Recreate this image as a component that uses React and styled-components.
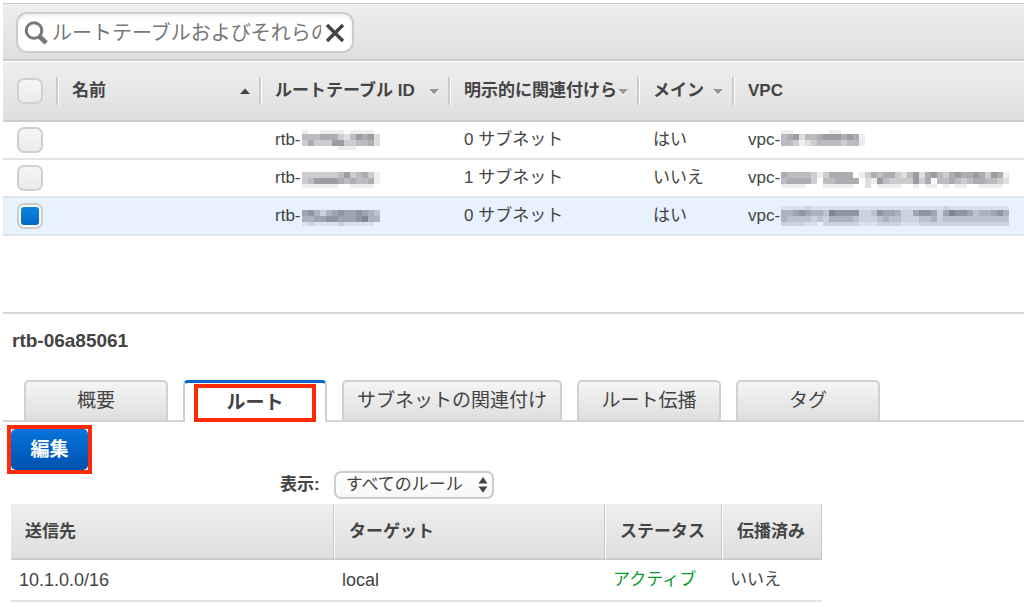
import { useState } from 'react';
import styled, { createGlobalStyle } from 'styled-components';

const GlobalStyle = createGlobalStyle`
  * {
    box-sizing: border-box;
  }

  body {
    margin: 0;
    background: #fff;
    color: #444;
    font-family: 'Liberation Sans', 'Noto Sans CJK JP', sans-serif;
    font-size: 17px;
    line-height: 24px;
  }

  button,
  input,
  select {
    font-family: inherit;
    line-height: inherit;
    color: inherit;
  }
`;

// each digit is how dark one mosaic block is
const MASKS = {
  rtbA: ['1001111011110', '4445553246562', '3533366334452', '0000001110000'],
  rtbB: ['0000000000000', '3333334634531', '3466665454451', '1111110011110'],
  rtbC: ['0000000000000', '5642456556543', '4455665556744', '1211112111110'],
  vpcA: ['11000000110000', '45624456665651', '44312344443441', '00000000000000'],
  vpcB: [
    '00000000000000000000000000000000000000',
    '54444313555501354553246256435655653651',
    '45555304455550216433336350445434554432',
    '11110001111100201111001011010110011110',
  ],
  vpcC: [
    '11112111111111111111111111121111111111',
    '44565443766662236554225665257665344564',
    '43333232444432223433222334233333333333',
    '22221102222221112222111222222222222222',
  ],
};

const TABLES = [
  { id: 'a', rtb: 'rtbA', subnets: '0 サブネット', main: 'はい', vpc: 'vpcA' },
  { id: 'b', rtb: 'rtbB', subnets: '1 サブネット', main: 'いいえ', vpc: 'vpcB' },
  { id: 'c', rtb: 'rtbC', subnets: '0 サブネット', main: 'はい', vpc: 'vpcC' },
];

const COLUMNS = [
  { label: '名前', width: 203, sort: 'asc' },
  { label: 'ルートテーブル ID', width: 189, sort: 'none' },
  { label: '明示的に関連付けられ', width: 189, sort: 'none' },
  { label: 'メイン', width: 95, sort: 'none' },
  { label: 'VPC' },
];

const TABS = ['概要', 'ルート', 'サブネットの関連付け', 'ルート伝播', 'タグ'];

const Mosaic = ({ rows }) => (
  <MosaicSvg width={rows[1].length * 6} height="20" aria-hidden="true">
    {rows.map((row, y) =>
      [...row].map((level, x) => (
        <rect
          key={`${x}-${y}`}
          x={x * 6}
          y={[0, 4, 10, 16][y]}
          width="6"
          height={[4, 6, 6, 4][y]}
          fill="#3c3c46"
          fillOpacity={level * 0.085}
        />
      ))
    )}
  </MosaicSvg>
);

const SortArrow = ({ dir }) => (
  <svg width="12" height="12" viewBox="0 0 12 12" aria-hidden="true">
    {dir === 'asc' ? (
      <path d="M1 9 6 3.6 11 9z" fill="#444" />
    ) : (
      <>
        <path d="M1 5h10L6 11z" fill="#fff" />
        <path d="M1 4h10L6 9.4z" fill="#999" />
      </>
    )}
  </svg>
);

const App = () => {
  const [query, setQuery] = useState('');
  const [selected, setSelected] = useState('c');
  const [tab, setTab] = useState('ルート');

  return (
    <Page>
      <GlobalStyle />
      <SearchBar>
        <SearchBox>
          <svg width="24" height="24" viewBox="0 0 24 24" aria-hidden="true">
            <circle cx="10" cy="9.5" r="7.8" fill="none" stroke="#777" strokeWidth="3" />
            <path d="m15.3 15.3 6.8 6.6" stroke="#777" strokeWidth="4.8" />
          </svg>
          <SearchInput
            aria-label="検索"
            placeholder="ルートテーブルおよびそれらの属性の検索"
            value={query}
            onChange={(e) => setQuery(e.target.value)}
          />
          <ClearButton type="button" aria-label="クリア" onClick={() => setQuery('')}>
            <svg width="20" height="20" viewBox="0 0 20 20" aria-hidden="true">
              <path d="m2 2 16 16M18 2 2 18" stroke="#444" strokeWidth="3.4" />
            </svg>
          </ClearButton>
        </SearchBox>
      </SearchBar>

      <ListTable>
        <colgroup>
          <Col $width={53} />
          {COLUMNS.map((c) => (
            <Col key={c.label} $width={c.width} />
          ))}
        </colgroup>
        <thead>
          <tr>
            <ListHead>
              <Checkbox aria-label="すべて選択" />
            </ListHead>
            {COLUMNS.map((c) => (
              <ListHead key={c.label}>
                <SortButton type="button">
                  <span>{c.label}</span>
                  {c.sort && <SortArrow dir={c.sort} />}
                </SortButton>
              </ListHead>
            ))}
          </tr>
        </thead>
        <tbody>
          {TABLES.map((t) => (
            <ListRow key={t.id} $selected={selected === t.id}>
              <CheckCell>
                <Checkbox
                  aria-label="ルートテーブルを選択"
                  checked={selected === t.id}
                  onChange={() => setSelected(t.id)}
                />
              </CheckCell>
              <td />
              <td>
                <Masked>
                  rtb-
                  <Mosaic rows={MASKS[t.rtb]} />
                </Masked>
              </td>
              <td>{t.subnets}</td>
              <td>{t.main}</td>
              <td>
                <Masked>
                  vpc-
                  <Mosaic rows={MASKS[t.vpc]} />
                </Masked>
              </td>
            </ListRow>
          ))}
        </tbody>
      </ListTable>

      <Detail>
        <DetailTitle>rtb-06a85061</DetailTitle>
        <TabList role="tablist">
          {TABS.map((name) => (
            <Tab
              key={name}
              type="button"
              role="tab"
              aria-selected={tab === name}
              $active={tab === name}
              onClick={() => setTab(name)}
            >
              {name === 'ルート' ? <TabMark>{name}</TabMark> : name}
            </Tab>
          ))}
        </TabList>

        <Panel>
          <EditMark>
            <EditButton type="button">編集</EditButton>
          </EditMark>
          <Filter>
            <label htmlFor="view">表示:</label>
            <SelectWrap>
              <Select id="view" defaultValue="all">
                <option value="all">すべてのルール</option>
              </Select>
              <svg width="10" height="18" viewBox="0 0 10 18" aria-hidden="true">
                <path d="M.5 7.4 5 1l4.5 6.4zM.5 10.4h9L5 16.8z" fill="#444" />
              </svg>
            </SelectWrap>
          </Filter>

          <RouteTable>
            <colgroup>
              <Col $width={323} />
              <Col $width={271} />
              <Col $width={117} />
              <Col $width={100} />
            </colgroup>
            <thead>
              <tr>
                <th>送信先</th>
                <th>ターゲット</th>
                <th>ステータス</th>
                <th>伝播済み</th>
              </tr>
            </thead>
            <tbody>
              <tr>
                <LatinCell>10.1.0.0/16</LatinCell>
                <LatinCell>local</LatinCell>
                <ActiveCell>アクティブ</ActiveCell>
                <td>いいえ</td>
              </tr>
            </tbody>
          </RouteTable>
        </Panel>
      </Detail>
    </Page>
  );
};

export default App;

const Page = styled.main`
  padding: 3px 0 0 3px;
`;

const SearchBar = styled.div`
  display: flex;
  align-items: center;
  height: 58px;
  padding: 2px 13px 0;
  background: linear-gradient(#eee, #dfdfdf);
  border-top: 1px solid #c8c8c8;
  border-bottom: 2px solid #ccc;
`;

const SearchBox = styled.div`
  display: flex;
  align-items: center;
  width: 338px;
  height: 41px;
  padding: 0 7px 0 6px;
  gap: 4px;
  background: #fff;
  border: 2px solid #ccc;
  border-radius: 11px;
  box-shadow: inset 0 2px 3px #eee;

  svg {
    flex: none;
  }
`;

const SearchInput = styled.input`
  flex: 1;
  min-width: 0;
  height: 32px;
  padding: 2px 0 0;
  border: 0;
  outline: 0;
  background: transparent;
  font-size: 20px;

  &::placeholder {
    color: #777;
    opacity: 1;
  }
`;

const ClearButton = styled.button`
  display: flex;
  padding: 0;
  border: 0;
  background: none;
`;

const Col = styled.col`
  width: ${({ $width }) => ($width ? `${$width}px` : 'auto')};
`;

const ListTable = styled.table`
  width: 100%;
  table-layout: fixed;
  border-collapse: separate;
  border-spacing: 0;

  td {
    height: 38px;
    padding: 0 0 0 16px;
    border-bottom: 2px solid #e4e4e4;
    white-space: nowrap;
  }
`;

const ListHead = styled.th`
  height: 61px;
  padding: 0;
  text-align: left;
  background: linear-gradient(#eee, #dfdfdf);
  border-top: 1px solid #fff;
  border-bottom: 2px solid #ccc;
`;

const SortButton = styled.button`
  display: flex;
  align-items: center;
  justify-content: space-between;
  width: 100%;
  height: 28px;
  padding: 0 8px 0 14px;
  border: 0;
  border-left: 2px solid #ccc;
  box-shadow: inset 1px 0 #fff;
  background: none;
  font-size: 17px;
  font-weight: bold;

  span {
    overflow: hidden;
    white-space: nowrap;
  }

  svg {
    flex: none;
  }
`;

const ListRow = styled.tr`
  background: ${({ $selected }) => ($selected ? '#e7f2fe' : '#fff')};
`;

const CheckCell = styled.td`
  && {
    padding: 0;
  }
`;

const Checkbox = styled.input.attrs({ type: 'checkbox' })`
  appearance: none;
  display: block;
  width: 26px;
  height: 26px;
  margin: 0 0 0 14px;
  border: 2px solid #d0d0d0;
  border-radius: 7px;
  background: linear-gradient(#f5f5f5, #ebebeb);

  &:checked {
    padding: 2px;
    border-color: #ccc;
    background: linear-gradient(#0a86e2, #0667c6) content-box, #f8f8f8;
  }
`;

const Masked = styled.span`
  display: flex;
  align-items: center;
  gap: 1px;
`;

const MosaicSvg = styled.svg`
  flex: none;
  shape-rendering: crispEdges;
`;

const Detail = styled.section`
  margin-top: 76px;
  border-top: 2px solid #d8d8d8;
`;

const DetailTitle = styled.h2`
  margin: 0;
  padding: 15px 9px;
  font-size: 19px;
  line-height: 24px;
`;

const TabList = styled.div`
  display: flex;
  align-items: flex-end;
  gap: 15px;
  height: 54px;
  padding: 0 21px;
  border-bottom: 2px solid #d4d4d4;
`;

const Tab = styled.button`
  display: flex;
  align-items: center;
  justify-content: center;
  flex: none;
  min-width: 144px;
  height: ${({ $active }) => ($active ? '42px' : '40px')};
  margin-bottom: ${({ $active }) => ($active ? '-2px' : '0')};
  padding: 0 13px;
  border: 2px solid #d0d0d0;
  border-bottom: 0;
  border-top: ${({ $active }) => ($active ? '3px solid #0667c6' : '2px solid #d0d0d0')};
  border-radius: 5px 5px 0 0;
  background: ${({ $active }) => ($active ? '#fff' : 'linear-gradient(#f5f5f5, #dedede)')};
  font-size: 19px;
  font-weight: ${({ $active }) => ($active ? 'bold' : 'normal')};
`;

const TabMark = styled.span`
  width: 114px;
  line-height: 30px;
  outline: 4px solid #ff2a06;
`;

const Panel = styled.div`
  padding: 7px 8px;
`;

const EditMark = styled.div`
  width: 77px;
  outline: 4px solid #ff2a06;
`;

const EditButton = styled.button`
  display: block;
  width: 100%;
  height: 41px;
  padding: 0;
  border: 0;
  border-radius: 5px;
  background: linear-gradient(#0775dd, #0050ae);
  color: #fff;
  font-size: 19px;
  font-weight: bold;
`;

const Filter = styled.div`
  display: flex;
  align-items: center;
  gap: 14px;
  padding: 1px 0 5px 269px;
  font-weight: bold;
`;

const SelectWrap = styled.div`
  display: grid;
  align-items: center;

  > * {
    grid-area: 1 / 1;
  }

  svg {
    justify-self: end;
    margin-right: 6px;
    pointer-events: none;
  }
`;

const Select = styled.select`
  appearance: none;
  width: 160px;
  height: 28px;
  padding: 0 10px;
  border: 2px solid #ccc;
  border-radius: 7px;
  background: linear-gradient(#fff, #f7f7f7);
  font-size: 17px;
`;

const RouteTable = styled.table`
  width: 811px;
  table-layout: fixed;
  border-collapse: separate;
  border-spacing: 0;

  th {
    height: 56px;
    padding: 2px 0 0 14px;
    text-align: left;
    background: linear-gradient(#eee, #dfdfdf);
    border-right: 1px solid #c8c8c8;
    border-bottom: 2px solid #ccc;
  }

  th + th {
    border-left: 1px solid #fff;
  }

  td {
    height: 42px;
    padding: 0 0 0 8px;
    border-bottom: 2px solid #e4e4e4;
  }
`;

const LatinCell = styled.td`
  font-size: 18px;
`;

const ActiveCell = styled.td`
  color: #0c9a2c;
`;
